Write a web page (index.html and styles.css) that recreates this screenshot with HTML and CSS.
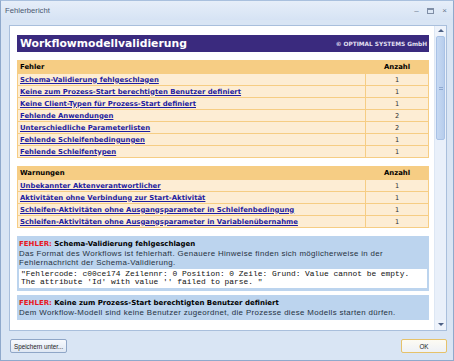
FILE: index.html
```html
<!DOCTYPE html>
<html lang="de">
<head>
  <meta charset="UTF-8" />
  <title>Fehlerbericht</title>
  <link rel="stylesheet" href="styles.css">
</head>
<body>
  <div class="window">
    <div class="titlebar">
      <span class="title">Fehlerbericht</span>
      <div class="controls">
        <span class="ctl">&#8211;</span>
        <span class="ctl max"></span>
        <span class="ctl">&#215;</span>
      </div>
    </div>

    <div class="client">
      <div class="view">
        <div class="panel">
          <div class="banner">
            <h1>Workflowmodellvalidierung</h1>
            <span class="copy">&copy; OPTIMAL SYSTEMS GmbH</span>
          </div>

          <table class="list">
            <tr class="head"><th>Fehler</th><th class="num">Anzahl</th></tr>
            <tr><td><a href="#">Schema-Validierung fehlgeschlagen</a></td><td class="num">1</td></tr>
            <tr><td><a href="#">Keine zum Prozess-Start berechtigten Benutzer definiert</a></td><td class="num">1</td></tr>
            <tr><td><a href="#">Keine Client-Typen für Prozess-Start definiert</a></td><td class="num">1</td></tr>
            <tr><td><a href="#">Fehlende Anwendungen</a></td><td class="num">2</td></tr>
            <tr><td><a href="#">Unterschiedliche Parameterlisten</a></td><td class="num">2</td></tr>
            <tr><td><a href="#">Fehlende Schleifenbedingungen</a></td><td class="num">1</td></tr>
            <tr><td><a href="#">Fehlende Schleifentypen</a></td><td class="num">1</td></tr>
          </table>

          <table class="list">
            <tr class="head"><th>Warnungen</th><th class="num">Anzahl</th></tr>
            <tr><td><a href="#">Unbekannter Aktenverantwortlicher</a></td><td class="num">1</td></tr>
            <tr><td><a href="#">Aktivitäten ohne Verbindung zur Start-Aktivität</a></td><td class="num">1</td></tr>
            <tr><td><a href="#">Schleifen-Aktivitäten ohne Ausgangsparameter in Schleifenbedingung</a></td><td class="num">1</td></tr>
            <tr><td><a href="#">Schleifen-Aktivitäten ohne Ausgangsparameter in Variablenübernahme</a></td><td class="num">1</td></tr>
          </table>

          <div class="issue">
            <div class="issue-title"><span class="tag">FEHLER:</span> Schema-Validierung fehlgeschlagen</div>
            <p>Das Format des Workflows ist fehlerhaft. Genauere Hinweise finden sich möglicherweise in der Fehlernachricht der Schema-Validierung.</p>
            <pre>"Fehlercode: c00ce174 Zeilennr: 0 Position: 0 Zeile: Grund: Value cannot be empty.
The attribute 'Id' with value '' failed to parse. "</pre>
          </div>

          <div class="issue">
            <div class="issue-title"><span class="tag">FEHLER:</span> Keine zum Prozess-Start berechtigten Benutzer definiert</div>
            <p>Dem Workflow-Modell sind keine Benutzer zugeordnet, die Prozesse diese Modells starten dürfen.</p>
          </div>
        </div>

        <div class="scrollbar">
          <div class="arrow up"></div>
          <div class="thumb"><span class="grip"></span></div>
          <div class="track"></div>
          <div class="arrow down"></div>
        </div>
      </div>

      <div class="buttons">
        <button class="btn">Speichern unter...</button>
        <button class="btn ok">OK</button>
      </div>
    </div>
    <span class="sizegrip"></span>
  </div>
</body>
</html>
```

FILE: styles.css
```css
:root {
  --frame: #d9e5f4;
  --purple: #3a2a7e;
  --orange: #f6cd84;
  --cream: #fdedd4;
  --issue: #bcd4ee;
  --link: #1d1ca0;
}

* {
  box-sizing: border-box;
  margin: 0;
  padding: 0;
}

html, body {
  width: 454px;
  height: 361px;
  overflow: hidden;
}

body {
  background: var(--frame);
  font-family: "DejaVu Sans", Verdana, sans-serif;
  color: #000;
}

.window {
  position: relative;
  height: 361px;
  border: 1px solid #8fa9cc;
  border-top-color: #a9c0de;
  background: var(--frame);
  display: flex;
  flex-direction: column;
}

/* title bar */
.titlebar {
  height: 19px;
  display: flex;
  align-items: center;
  justify-content: space-between;
  padding: 0 5px 0 4px;
  background: linear-gradient(#e6eef9, #d6e3f4);
}

.title {
  font-family: "Liberation Sans", Arial, sans-serif;
  font-size: 7.7px;
  color: #4a5870;
}

.controls {
  display: flex;
  gap: 7px;
  align-items: center;
}

.ctl {
  width: 7px;
  font-family: "Liberation Sans", Arial, sans-serif;
  font-size: 8px;
  color: #6a7890;
  text-align: center;
}

.ctl.max {
  height: 6px;
  border: 1px solid #7f8ea6;
  border-top-width: 2px;
}

/* client area */
.client {
  flex: 1;
  padding: 5px 6px 0 8px;
  display: flex;
  flex-direction: column;
}

.view {
  height: 306px;
  display: flex;
  border: 1px solid #a9bfdc;
  background: #fff;
}

.panel {
  flex: 1;
  overflow: hidden;
  padding: 9px 5px 0 7px;
  background: #fff;
}

.banner {
  height: 17px;
  background: var(--purple);
  color: #fff;
  display: flex;
  align-items: center;
  justify-content: space-between;
  padding: 0 2px 0 3px;
  margin-bottom: 8px;
}

.banner h1 {
  font-size: 10.8px;
  font-weight: bold;
}

.copy {
  font-size: 5.8px;
  font-weight: bold;
  color: #e4e0f2;
}

/* tables */
.list {
  width: 100%;
  border-collapse: separate;
  border-spacing: 1px;
  background: var(--orange);
  margin-bottom: 8px;
  font-size: 6.9px;
}

.list th {
  height: 12px;
  text-align: left;
  padding: 0 2px;
  background: var(--orange);
  font-weight: bold;
}

.list td {
  height: 11px;
  padding: 0 2px;
  background: var(--cream);
  white-space: nowrap;
}

.list .num {
  width: 62px;
  text-align: center;
}

.list td.num {
  color: #333;
  font-size: 6.6px;
}

.list a {
  color: var(--link);
  font-weight: bold;
  text-decoration: underline;
}

/* issue boxes */
.issue {
  background: var(--issue);
  padding: 3px 2px;
  margin-bottom: 4px;
}

.issue-title {
  font-size: 7px;
  font-weight: bold;
  line-height: 10px;
}

.tag {
  color: #e81620;
}

.issue p {
  font-family: "Liberation Sans", Arial, sans-serif;
  font-size: 7.9px;
  letter-spacing: 0.35px;
  line-height: 9px;
  color: #26323f;
}

.issue pre {
  margin-top: 2px;
  background: #fff;
  padding: 1px 2px 2px;
  font-family: "Liberation Mono", "Courier New", monospace;
  font-size: 7.9px;
  line-height: 8px;
  color: #111;
}

/* scrollbar */
.scrollbar {
  width: 12px;
  display: flex;
  flex-direction: column;
  background: #e9f0fa;
  border-left: 1px solid #dde7f4;
}

.arrow {
  height: 10px;
  position: relative;
  background: #eef3fb;
}

.arrow::after {
  content: '';
  position: absolute;
  left: 3px;
  top: 3px;
  border-left: 3px solid transparent;
  border-right: 3px solid transparent;
}

.arrow.up::after {
  border-bottom: 3px solid #4d6185;
}

.arrow.down::after {
  border-top: 3px solid #4d6185;
}

.thumb {
  height: 104px;
  margin: 0 1px;
  background: linear-gradient(90deg, #c6d9f3, #b7cdec);
  border: 1px solid #a9c2e6;
  border-radius: 2px;
  display: flex;
  align-items: center;
  justify-content: center;
}

.grip {
  width: 4px;
  height: 3px;
  border-top: 1px solid #8ea8d0;
  border-bottom: 1px solid #8ea8d0;
}

.track {
  flex: 1;
}

/* buttons */
.buttons {
  display: flex;
  justify-content: space-between;
  margin-top: 8px;
  padding-left: 1px;
}

.btn {
  height: 14px;
  padding: 0 3px;
  font-family: "Liberation Sans", Arial, sans-serif;
  font-size: 6.3px;
  color: #222;
  background: linear-gradient(#f7f9fd, #dfe7f3);
  border: 1px solid #8fa6c7;
  border-radius: 2px;
}

.btn.ok {
  width: 46px;
  border-color: #e6c26a;
  background: linear-gradient(#fdfbf3, #eef1f6);
}

.sizegrip {
  position: absolute;
  right: 1px;
  bottom: 1px;
  width: 6px;
  height: 6px;
  background: radial-gradient(circle, #8fa6c7 35%, transparent 40%) 0 0 / 2px 2px;
  clip-path: polygon(100% 0, 100% 100%, 0 100%);
}
```
